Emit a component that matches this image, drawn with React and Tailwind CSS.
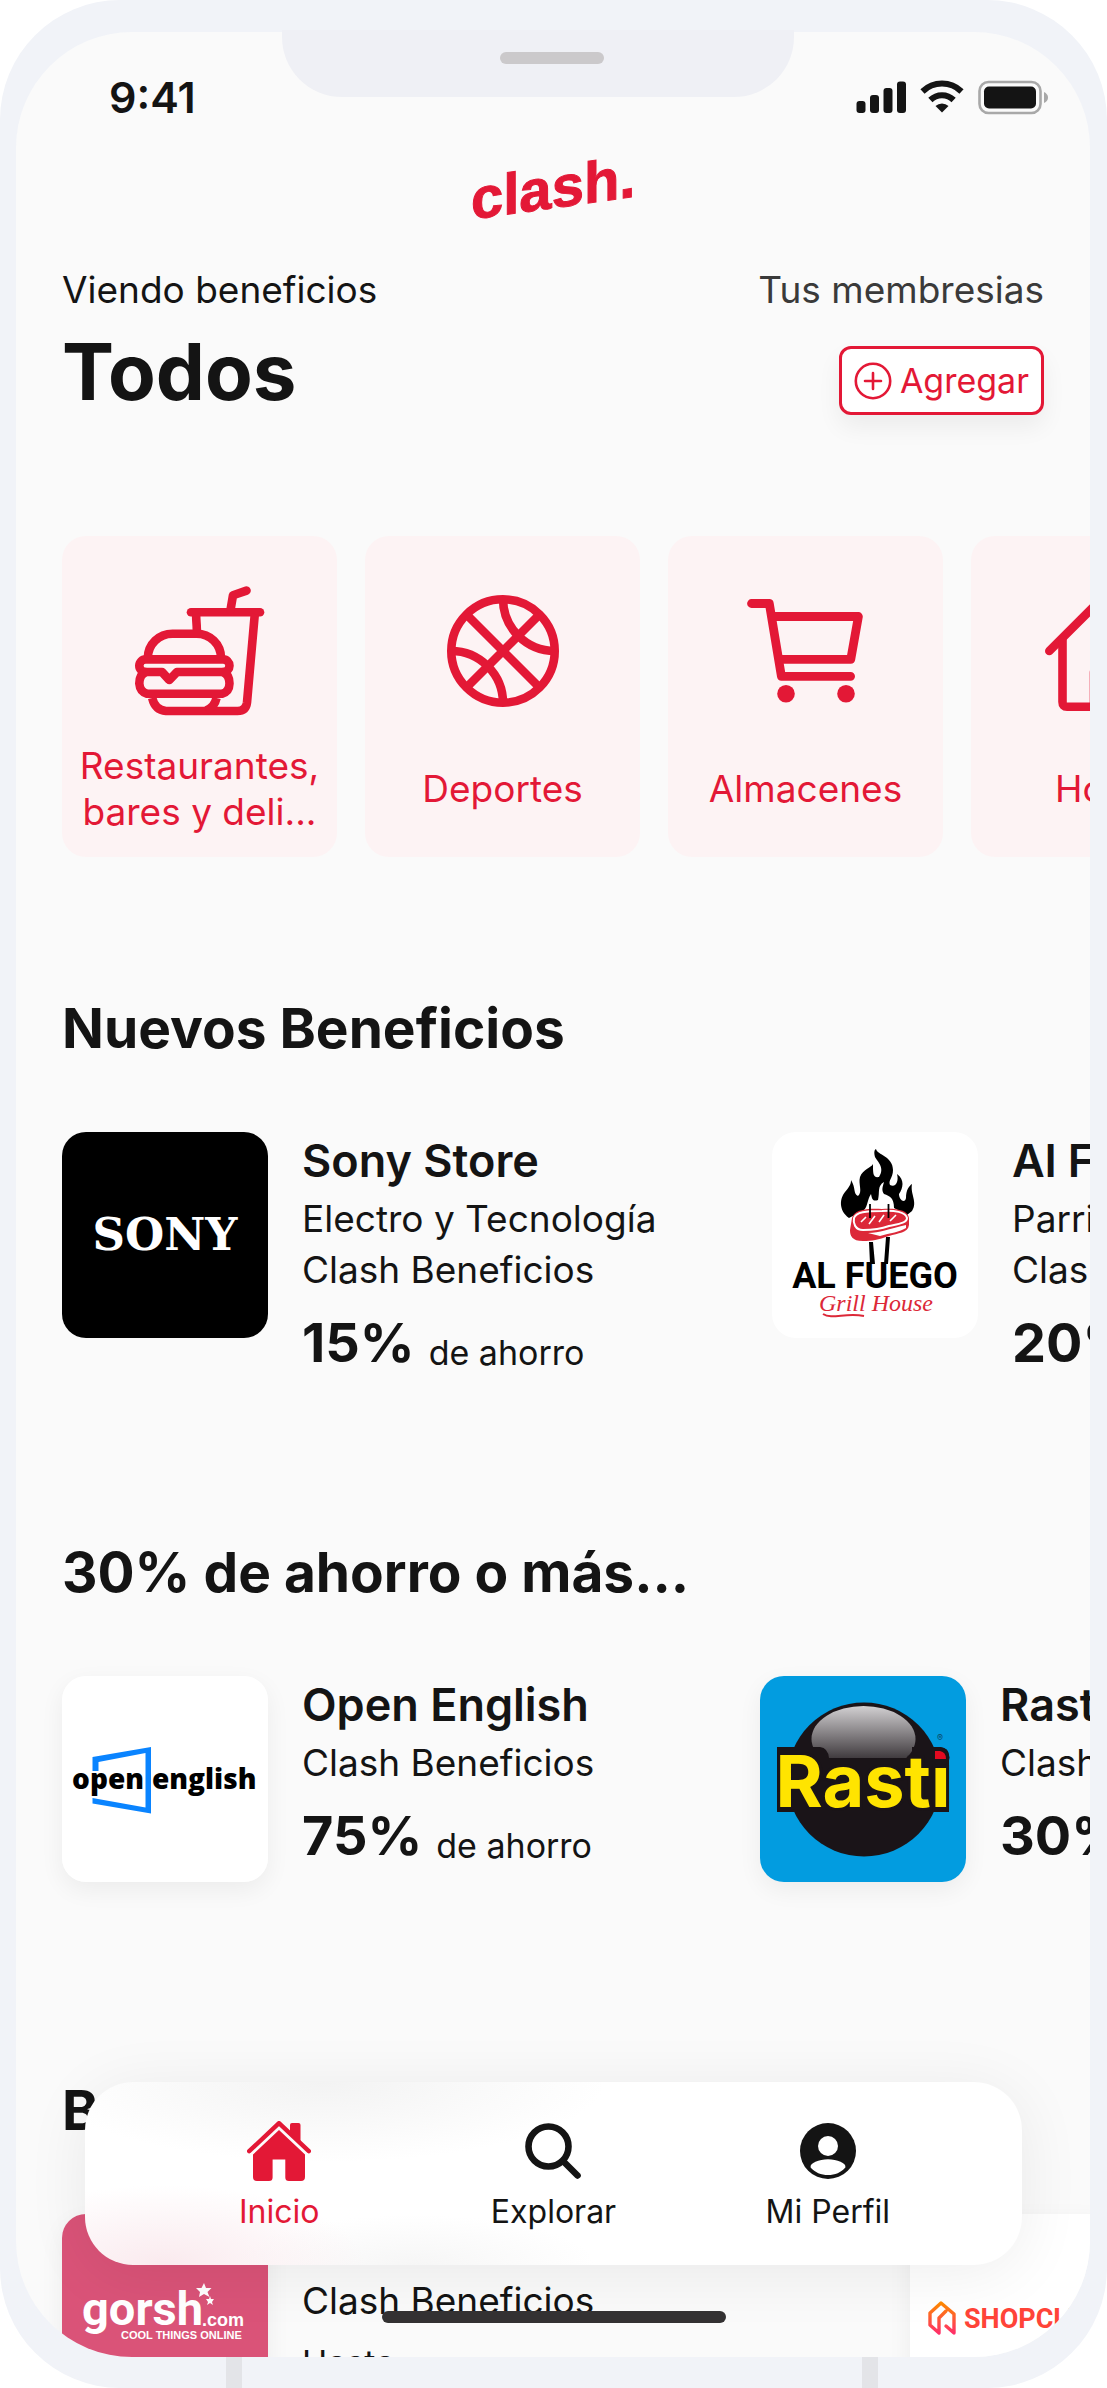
import { clsx } from "clsx";

const categories = [
  { name: "Restaurantes, bares y delivery", short: "Restaurantes, bares y deli...", icon: BurgerIcon },
  { name: "Deportes", icon: BallIcon },
  { name: "Almacenes", icon: CartIcon },
  { name: "Hogar", icon: HouseIcon },
];

const sections = [
  {
    title: "Nuevos Beneficios",
    spacing: "pb-[153px]",
    itemWidth: "w-[710px]",
    items: [
      { name: "Sony Store", lines: ["Electro y Tecnología", "Clash Beneficios"], percent: "15%", logo: SonyLogo },
      { name: "Al Fuego", lines: ["Parrilla", "Clash Beneficios"], percent: "20%", logo: AlFuegoLogo },
    ],
  },
  {
    title: "30% de ahorro o más...",
    spacing: "pb-[194px]",
    itemWidth: "w-[698px]",
    shadow: true,
    items: [
      { name: "Open English", lines: ["Clash Beneficios"], percent: "75%", logo: OpenEnglishLogo },
      { name: "Rasti", lines: ["Clash Beneficios"], percent: "30%", logo: RastiLogo },
    ],
  },
  {
    title: "Beneficios Online",
    spacing: "pb-[194px]",
    itemWidth: "w-[848px]",
    shadow: true,
    items: [
      { name: "Gorsh", lines: ["Clash Beneficios"], prefix: "Hasta", percent: "20%", logo: GorshLogo },
      { name: "Shopclub", lines: ["Clash Beneficios"], percent: "20%", logo: ShopclubLogo },
    ],
  },
];

const tabs = [
  { name: "Inicio", icon: HomeTabIcon, active: true },
  { name: "Explorar", icon: SearchTabIcon },
  { name: "Mi Perfil", icon: ProfileTabIcon },
];

/* ---------- icons ---------- */

function BurgerIcon() {
  return (
    <svg width="130" height="130" viewBox="0 0 130 130" fill="none" stroke="currentColor" strokeWidth="8.6" strokeLinecap="round" strokeLinejoin="round" aria-hidden="true">
      <path d="M56 26.3H125" />
      <path d="M95.5 24L98 9.2L111.5 4.6" />
      <path d="M61 28L62 46" strokeLinecap="butt" />
      <path d="M119.8 28L112 116.5Q111 125 102.5 125H31Q20 124 17.2 112" strokeLinecap="butt" />
      <path d="M81.5 112Q79.5 121.5 71 124.5" strokeLinecap="butt" />
      <path d="M12.8 72C13 58 24 47.8 37.5 47.8H61.5C75 47.8 86 58 86 72" strokeLinecap="butt" />
      <path d="M10.6 73.4H88.2A6.3 6.3 0 0 1 88.2 86H42L34.3 94L27 86H10.6A6.3 6.3 0 0 1 10.6 73.4Z" />
      <path d="M10.6 86Q4.3 89 4.3 97.5Q5 106 12 107.7H87Q94.3 106 94.5 97.5Q94.5 89 88.2 86" />
    </svg>
  );
}

function BallIcon() {
  return (
    <svg width="112" height="112" viewBox="0 0 112 112" fill="none" stroke="currentColor" strokeWidth="8.6" aria-hidden="true">
      <circle cx="56" cy="56" r="51.7" />
      <path d="M20 20L92 92M92 20L20 92" />
      <path d="M56 4A52 52 0 0 0 108 56M4 56A52 52 0 0 1 56 108" />
    </svg>
  );
}

function CartIcon() {
  return (
    <svg width="118" height="104" viewBox="0 0 118 104" fill="none" stroke="currentColor" strokeWidth="8.8" strokeLinecap="round" strokeLinejoin="round" aria-hidden="true">
      <path d="M4.5 4.5H22.3L34.4 77.3H103.6" />
      <path d="M26 17.5H111.4L103.8 60.3H33" />
      <g fill="currentColor" stroke="none">
        <circle cx="39" cy="94.7" r="8.8" />
        <circle cx="99" cy="94.7" r="8.8" />
      </g>
    </svg>
  );
}

function HouseIcon() {
  return (
    <svg width="128" height="128" viewBox="0 0 128 128" fill="none" stroke="currentColor" strokeWidth="8.6" strokeLinecap="round" strokeLinejoin="round" aria-hidden="true">
      <path d="M4.3 64L64 4.3L123.7 64" />
      <path d="M17.5 53V115Q17.5 119.7 22 119.7H106Q110.5 119.7 110.5 115V53" />
      <path d="M49 119V86Q49 81 54 81H74Q79 81 79 86V119" />
    </svg>
  );
}

function HomeTabIcon() {
  return (
    <svg width="64" height="60" viewBox="0 0 64 60" fill="currentColor" aria-hidden="true">
      <path d="M2.2 30.2L32 2.2L61.8 30.2" fill="none" stroke="currentColor" strokeWidth="4.4" strokeLinecap="round" strokeLinejoin="round" />
      <path d="M43 11V4Q43 2 45 2H51.5Q53.5 2 53.5 4V22Z" />
      <path d="M32 9L58 33.5V56Q58 60 54 60H42Q38.3 60 38.3 56.5V38.5H25.6V56.5Q25.6 60 22 60H10Q6 60 6 56V33.5Z" />
    </svg>
  );
}

function SearchTabIcon() {
  return (
    <svg width="56" height="56" viewBox="0 0 56 56" fill="none" stroke="currentColor" strokeWidth="6.6" strokeLinecap="round" aria-hidden="true">
      <circle cx="23.5" cy="23.5" r="20" />
      <path d="M38 38L52.5 52.5" />
    </svg>
  );
}

function ProfileTabIcon() {
  return (
    <svg width="56" height="56" viewBox="0 0 56 56" aria-hidden="true">
      <circle cx="28" cy="28" r="28" fill="currentColor" />
      <circle cx="28" cy="23" r="10" fill="#fff" />
      <path d="M10.6 44.5C9.5 40 19 36.3 28 36.3S46.5 40 45.4 44.5C41 49.5 35 52 28 52S15 49.5 10.6 44.5Z" fill="#fff" />
    </svg>
  );
}

function PlusIcon() {
  return (
    <svg width="38" height="38" viewBox="0 0 38 38" fill="none" stroke="currentColor" strokeWidth="2.6" strokeLinecap="round" aria-hidden="true">
      <circle cx="19" cy="19" r="17.2" />
      <path d="M19 11V27M11 19H27" />
    </svg>
  );
}

function StatusIcons() {
  return (
    <svg width="194" height="36" viewBox="0 0 194 36" aria-hidden="true">
      <g fill="#141414">
        <rect x="2.5" y="22" width="9" height="12" rx="3" />
        <rect x="16" y="16" width="9" height="18" rx="3" />
        <rect x="29.5" y="9" width="9" height="25" rx="3" />
        <rect x="43" y="2.5" width="9" height="31.5" rx="3" />
        <path d="M88 33.5L81.5 27A9.5 9.5 0 0 1 94.5 27Z" />
      </g>
      <g fill="none" stroke="#141414" strokeWidth="6">
        <path d="M76.4 21A16.5 16.5 0 0 1 99.6 21" />
        <path d="M68.5 12.5A28 28 0 0 1 107.5 12.5" />
      </g>
      <rect x="125.5" y="3" width="61" height="31" rx="9" fill="none" stroke="#a8a8a8" strokeWidth="2.6" />
      <rect x="130" y="7.5" width="52" height="22" rx="5" fill="#141414" />
      <path d="M190 13Q194 15 194 18.5T190 24Z" fill="#a8a8a8" />
    </svg>
  );
}

/* ---------- brand logos ---------- */

function SonyLogo() {
  return (
    <svg viewBox="0 0 206 206" className="size-full bg-black" role="img" aria-label="Sony">
      <text x="103" y="118" textAnchor="middle" fill="#fff" fontFamily="DejaVu Serif, serif" fontSize="45" fontWeight="700">SONY</text>
    </svg>
  );
}

function AlFuegoLogo() {
  return (
    <svg viewBox="0 0 206 206" className="size-full bg-white" role="img" aria-label="Al Fuego Grill House">
      <path d="M77 86C66 78 68 66 73 60C78 54 79 52 79 48C84 56 81 62 86 64C91 60 86 52 88 45C91 37 99 36 101 32C101 42 101 46 107 45C113 36 106 30 103 25C102 21 102 18 104 17C105 23 121 24 121 38C121 46 116 48 118 53C124 56 127 49 125 42C133 48 131 56 127 62C127 68 133 72 134 66C134 58 137 54 140 52C138 62 146 70 140 79L135 83L122 76C122 66 118 64 112 62C109 58 111 54 112 50C105 54 108 60 106 68C100 70 100 66 99 62C95 68 96 74 92 78Z" fill="#000" />
      <path d="M80 86C82 78 94 76 110 77C124 76 136 78 137 86V93C136 101 126 101 117 104C106 108 100 109 91 109C80 109 78 104 78 98Z" fill="#dc2838" />
      <path d="M82 86C84 80 94 79 110 79C122 78 134 80 135 86C135 91 126 92 117 94C106 98 98 98 91 98C83 98 81 91 82 86Z" fill="none" stroke="#fff" strokeWidth="2" />
      <path d="M96 101C108 101 116 97 134 93V96C128 100 118 101 108 104Z" fill="#fff" />
      <path d="M89 90L94 85M97 92L103 84M107 90L112 83M118 89L124 83" stroke="#fff" strokeWidth="1.6" />
      <path d="M98 72V86M116.5 72V86" stroke="#000" strokeWidth="1.8" />
      <path d="M97 110H101L103 132H98ZM114 105H118L116 132H112Z" fill="#000" />
      <text x="103" y="156" textAnchor="middle" fill="#000" fontFamily="Roboto, sans-serif" fontSize="36" fontWeight="700">AL FUEGO</text>
      <text x="104" y="179" textAnchor="middle" fill="#dc2838" stroke="#fff" strokeWidth="3" paintOrder="stroke" fontFamily="Liberation Serif, serif" fontStyle="italic" fontSize="24">Grill House</text>
      <path d="M51 182C60 188 74 180 92 184" fill="none" stroke="#dc2838" strokeWidth="2" />
    </svg>
  );
}

function OpenEnglishLogo() {
  return (
    <svg viewBox="0 0 206 206" className="size-full bg-white" role="img" aria-label="Open English">
      <path d="M30.5 95V81L89 71V137.5L30.5 127.5V122L83.5 131.5V77L36.5 86V95Z" fill="#0a84ff" />
      <g fill="#000" fontFamily="Open Sans, sans-serif" fontWeight="800" fontSize="28">
        <text x="82" y="113" textAnchor="end">open</text>
        <text x="90" y="113">english</text>
      </g>
    </svg>
  );
}

function RastiLogo() {
  return (
    <svg viewBox="0 0 206 206" className="size-full bg-[#029ce0]" role="img" aria-label="Rasti">
      <defs>
        <linearGradient id="rasti-shine" x1="0" y1="0" x2="0" y2="1">
          <stop offset="0" stopColor="#d2d0d2" />
          <stop offset="1" stopColor="#1a1418" />
        </linearGradient>
      </defs>
      <circle cx="104" cy="103.5" r="77" fill="#1a1418" />
      <ellipse cx="103.5" cy="63" rx="52" ry="33" fill="url(#rasti-shine)" />
      <path d="M17 71H60Q68 72 69 82H152V71H180Q189 72 189 80V136H17Z" fill="#1a1418" />
      <text x="103" y="131" textAnchor="middle" fill="#ffe400" stroke="#1a1418" strokeWidth="6" paintOrder="stroke" fontFamily="Inter, sans-serif" fontWeight="700" fontSize="72">Rasti</text>
      <path d="M173 71H180Q189 72 189 80V87H173Z" fill="#1a1418" />
      <path d="M175 75H180Q186 76 186 83H175Z" fill="#e30a20" />
      <text x="180" y="65" textAnchor="middle" fill="#0b4a68" fontFamily="Inter, sans-serif" fontSize="9">®</text>
    </svg>
  );
}

function GorshLogo() {
  return (
    <svg viewBox="0 0 206 206" className="size-full bg-[#da5378]" role="img" aria-label="gorsh.com cool things online">
      <g fill="#fff">
        <text x="20" y="111" fontFamily="Roboto, sans-serif" fontWeight="700" fontSize="47">gorsh</text>
        <text x="140" y="112" fontFamily="Liberation Sans, sans-serif" fontWeight="700" fontSize="18">.com</text>
        <text x="59" y="125" fontFamily="Liberation Sans, sans-serif" fontWeight="700" fontSize="11">COOL THINGS ONLINE</text>
        <path d="M142 69L144 74L149.5 74L145.5 78L147.5 83L142 80L137 83L138 78L134 74L139.5 74Z" />
        <path d="M148 82L149 85L152 85L150 88L151 91L148 89L145 91L146 88L144 85L147 85Z" />
      </g>
    </svg>
  );
}

function ShopclubLogo() {
  return (
    <svg viewBox="0 0 206 206" className="size-full bg-white" role="img" aria-label="Shopclub">
      <defs>
        <linearGradient id="shop-mark" x1="0" y1="0" x2="0" y2="1">
          <stop offset="0" stopColor="#ff8a00" />
          <stop offset="1" stopColor="#ff2f68" />
        </linearGradient>
      </defs>
      <path d="M29 119V104L36 97M29 119L20 111V99L31 89L44 100V119L36 112" fill="none" stroke="url(#shop-mark)" strokeWidth="3.4" strokeLinecap="round" strokeLinejoin="round" />
      <text x="54" y="114" fill="#ff4438" fontFamily="Roboto, sans-serif" fontWeight="700" fontSize="27">SHOPCLUB</text>
    </svg>
  );
}

/* ---------- page pieces ---------- */

function StatusBar() {
  return (
    <div className="flex items-center justify-between pt-10 pr-[42px] pl-[93px]">
      <span className="text-[43px] leading-[50px] font-semibold">9:41</span>
      <StatusIcons />
    </div>
  );
}

function CategoryCard({ category }) {
  const Icon = category.icon;
  return (
    <a href="#" aria-label={category.name} className="flex w-[275px] shrink-0 flex-col items-center rounded-3xl bg-[#fdf3f4] pt-[50px] pb-[22px] text-[#e31836]">
      <span className="flex h-[130px] items-center">
        <Icon />
      </span>
      <span className="mt-[27px] flex h-[92px] items-center px-2 text-center text-[37px] leading-[46px]">{category.short || category.name}</span>
    </a>
  );
}

function BenefitItem({ item, width, shadow }) {
  const Logo = item.logo;
  return (
    <a href="#" className={clsx("flex shrink-0 items-start", width)}>
      <span className={clsx("size-[206px] shrink-0 overflow-hidden rounded-3xl", shadow && "shadow-[0_8px_24px_rgba(0,0,0,0.06)]")}>
        <Logo />
      </span>
      <span className="flex flex-col pl-[34px] whitespace-nowrap">
        <span className="mb-[3px] text-[45px] leading-[58px] font-semibold">{item.name}</span>
        {item.lines.map((line) => (
          <span key={line} className="text-[37px] leading-[51px]">{line}</span>
        ))}
        {item.prefix && <span className="mt-3 text-[34px] leading-[50px]">{item.prefix}</span>}
        <span className="mt-[6px] flex items-end gap-[14px]">
          <span className="text-[54px] leading-[84px] font-bold">{item.percent}</span>
          <span className="text-[34px] leading-[64px]">de ahorro</span>
        </span>
      </span>
    </a>
  );
}

function Section({ section }) {
  return (
    <section className={clsx("pl-[46px]", section.spacing)}>
      <h2 className="text-[55px] leading-[68px] font-bold">{section.title}</h2>
      <div className="mt-[70px] flex">
        {section.items.map((item) => (
          <BenefitItem key={item.name} item={item} width={section.itemWidth} shadow={section.shadow} />
        ))}
      </div>
    </section>
  );
}

function TabBar() {
  return (
    <nav className="absolute inset-x-[85px] bottom-[123px] grid grid-cols-3 rounded-[48px] bg-white bg-[radial-gradient(200px_80px_at_80px_100%,#faeaee,transparent),radial-gradient(280px_80px_at_240px_0%,#f3f3f3,transparent),radial-gradient(180px_50px_at_330px_100%,#f6f6f6,transparent)] px-[57px] pt-[39px] pb-[34px] shadow-[0_8px_64px_rgba(0,0,0,0.07)]">
      {tabs.map((tab) => {
        const Icon = tab.icon;
        return (
          <a key={tab.name} href="#" className={clsx("flex flex-col items-center gap-[11px]", tab.active && "text-[#e31836]")}>
            <span className="flex h-[60px] items-center">
              <Icon />
            </span>
            <span className="text-[32px] leading-[39px]">{tab.name}</span>
          </a>
        );
      })}
    </nav>
  );
}

export default function App() {
  return (
    <div className="bg-white font-['Inter',sans-serif] text-[#141414]">
      <div className="relative flex h-screen flex-col rounded-[120px] bg-[#f1f3f8] pt-8 pr-[17px] pb-[31px] pl-4">
        {/* antenna lines */}
        <span className="absolute bottom-0 left-[226px] h-[31px] w-4 bg-[#e3e4e8]" />
        <span className="absolute right-[229px] bottom-0 h-[31px] w-4 bg-[#e3e4e8]" />

        <main className="min-h-0 flex-1 overflow-hidden rounded-[116px] bg-[#fafafa]">
          <StatusBar />

          <header className="px-[46px]">
            <div className="mt-[34px] flex justify-center">
              <span className="-skew-y-8 font-['Liberation_Sans',sans-serif] text-[58px] leading-[64px] font-bold text-[#e31836] [-webkit-text-stroke:1px_#e31836]">clash.</span>
            </div>
            <div className="mt-[46px] flex items-start justify-between">
              <div>
                <p className="text-[37px] leading-[48px]">Viendo beneficios</p>
                <h1 className="mt-[10px] text-[78px] leading-[96px] font-bold">Todos</h1>
              </div>
              <div className="flex flex-col items-end">
                <p className="text-[37px] leading-[48px] text-[#3a3a3a]">Tus membresias</p>
                <button type="button" className="mt-8 flex h-[69px] items-center gap-2 rounded-xl border-3 border-[#e31836] bg-white px-3 text-[34px] text-[#e31836] shadow-[0_12px_24px_rgba(0,0,0,0.06)]">
                  <PlusIcon />
                  Agregar
                </button>
              </div>
            </div>
          </header>

          <div className="mt-[116px] flex gap-7 pl-[46px]">
            {categories.map((category) => (
              <CategoryCard key={category.name} category={category} />
            ))}
          </div>

          <div className="mt-[137px]">
            {sections.map((section) => (
              <Section key={section.title} section={section} />
            ))}
          </div>
        </main>

        <TabBar />

        {/* home indicator */}
        <span className="absolute bottom-[65px] left-1/2 h-3 w-[344px] -translate-x-1/2 rounded-full bg-[#333132]" />

        {/* notch */}
        <div className="absolute top-[30px] left-[282px] flex h-[67px] w-[512px] justify-center rounded-b-[60px] bg-[#eff0f5]">
          <span className="mt-[22px] ml-7 h-3 w-[104px] rounded-full bg-[#cbc9cb]" />
        </div>
      </div>
    </div>
  );
}
